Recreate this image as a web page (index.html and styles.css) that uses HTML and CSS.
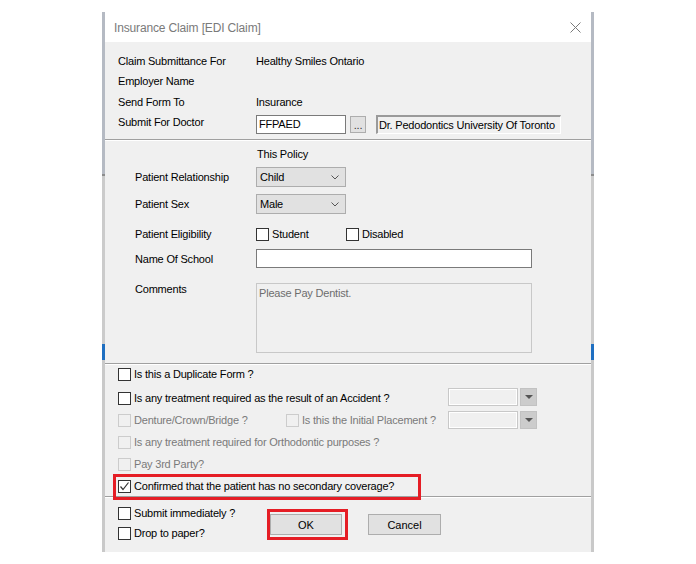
FILE: index.html
```html
<!DOCTYPE html>
<html lang="en">
<head>
    <meta charset="UTF-8">
    <meta name="viewport" content="width=device-width, initial-scale=1.0">
    <title>Insurance Claim [EDI Claim]</title>
    <link rel="stylesheet" href="styles.css">
</head>
<body>

<div class="screen">
    <div class="frame">
        <div class="dialog">

            <!-- Title Bar -->
            <div class="title-bar">
                <span class="title">Insurance Claim [EDI Claim]</span>
                <svg class="close" width="11" height="11" viewBox="0 0 11 11">
                    <path d="M0.5 0.5 L10.5 10.5 M10.5 0.5 L0.5 10.5" stroke="#7a7a7a" stroke-width="1" fill="none"/>
                </svg>
            </div>

            <div class="dialog-body">

                <!-- Claim Info -->
                <div class="claim-info">
                    <div class="info-row"><span class="info-label">Claim Submittance For</span><span>Healthy Smiles Ontario</span></div>
                    <div class="info-row"><span class="info-label">Employer Name</span></div>
                    <div class="info-row send"><span class="info-label">Send Form To</span><span>Insurance</span></div>
                    <div class="info-row doctor">
                        <span class="info-label">Submit For Doctor</span>
                        <div class="text-input doctor-code">FFPAED</div>
                        <div class="browse-btn">...</div>
                        <div class="doctor-name">Dr. Pedodontics University Of Toronto</div>
                    </div>
                </div>

                <div class="separator"></div>

                <!-- Policy -->
                <div class="policy">
                    <div class="policy-title">This Policy</div>

                    <div class="form-row relationship">
                        <span class="form-label">Patient Relationship</span>
                        <div class="select"><span>Child</span>
                            <svg width="8" height="5" viewBox="0 0 8 5"><path d="M0.5 0.5 L4 4 L7.5 0.5" stroke="#555" fill="none"/></svg>
                        </div>
                    </div>

                    <div class="form-row sex">
                        <span class="form-label">Patient Sex</span>
                        <div class="select"><span>Male</span>
                            <svg width="8" height="5" viewBox="0 0 8 5"><path d="M0.5 0.5 L4 4 L7.5 0.5" stroke="#555" fill="none"/></svg>
                        </div>
                    </div>

                    <div class="form-row eligibility">
                        <span class="form-label">Patient Eligibility</span>
                        <label class="check student"><span class="box"></span>Student</label>
                        <label class="check"><span class="box"></span>Disabled</label>
                    </div>

                    <div class="form-row school">
                        <span class="form-label">Name Of School</span>
                        <div class="text-input school-input"></div>
                    </div>

                    <div class="form-row comments">
                        <span class="form-label">Comments</span>
                        <div class="comments-box">Please Pay Dentist.</div>
                    </div>
                </div>

                <div class="separator"></div>

                <!-- Questions -->
                <div class="questions">
                    <div class="q-row">
                        <label class="check"><span class="box"></span>Is this a Duplicate Form ?</label>
                    </div>
                    <div class="q-row accident">
                        <label class="check"><span class="box"></span>Is any treatment required as the result of an Accident ?</label>
                        <div class="combo">
                            <div class="combo-field"></div>
                            <div class="combo-btn"><svg width="8" height="4" viewBox="0 0 8 4"><polygon points="0,0 8,0 4,4" fill="#555"/></svg></div>
                        </div>
                    </div>
                    <div class="q-row">
                        <label class="check disabled denture"><span class="box"></span>Denture/Crown/Bridge ?</label>
                        <label class="check disabled"><span class="box"></span>Is this the Initial Placement ?</label>
                        <div class="combo">
                            <div class="combo-field"></div>
                            <div class="combo-btn"><svg width="8" height="4" viewBox="0 0 8 4"><polygon points="0,0 8,0 4,4" fill="#555"/></svg></div>
                        </div>
                    </div>
                    <div class="q-row">
                        <label class="check disabled"><span class="box"></span>Is any treatment required for Orthodontic purposes ?</label>
                    </div>
                    <div class="q-row">
                        <label class="check disabled"><span class="box"></span>Pay 3rd Party?</label>
                    </div>
                    <div class="q-row highlight">
                        <label class="check"><span class="box">
                            <svg width="11" height="11" viewBox="0 0 11 11"><path d="M1.5 5.5 L4 8.5 L9.5 1.5" stroke="#333" stroke-width="1.2" fill="none"/></svg>
                        </span>Confirmed that the patient has no secondary coverage?</label>
                    </div>
                </div>

                <div class="separator"></div>

                <!-- Footer -->
                <div class="footer">
                    <div class="footer-checks">
                        <div class="q-row"><label class="check"><span class="box"></span>Submit immediately ?</label></div>
                        <div class="q-row"><label class="check"><span class="box"></span>Drop to paper?</label></div>
                    </div>
                    <div class="ok-mark"><button class="btn">OK</button></div>
                    <button class="btn cancel">Cancel</button>
                </div>

            </div>
        </div>
    </div>
</div>

</body>
</html>
```

FILE: styles.css
```css
/* General Styles */
body {
    margin: 0;
    background: #ffffff;
    font-family: "Liberation Sans", Arial, sans-serif;
    font-size: 11px;
    letter-spacing: -0.2px;
    color: #000;
}

/* Window behind the dialog */
.screen {
    padding: 12px 0 0 102px;
}

.frame {
    width: 492px;
    padding: 0 3px;
    box-sizing: border-box;
    background: linear-gradient(to bottom,
        #b5bac3 0, #b5bac3 162px,
        #8d8d8d 162px, #8d8d8d 164px,
        #cbcbcb 164px, #cbcbcb 332px,
        #1f6fc1 332px, #1f6fc1 348px,
        #c9c9c9 348px);
}

.dialog {
    height: 540px;
    display: flex;
    flex-direction: column;
}

/* Title Bar */
.title-bar {
    height: 30px;
    background: #fff;
    display: flex;
    align-items: center;
    justify-content: space-between;
    padding: 0 10px 0 9px;
}

.title {
    font-size: 12px;
    letter-spacing: -0.15px;
    color: #7a7a7a;
    margin-top: 2px;
}

.dialog-body {
    flex: 1;
    background: #f0f0f0;
}

.separator {
    border-top: 1px solid #a0a0a0;
    box-shadow: 0 1px 0 #fff;
}

/* Claim Info */
.claim-info {
    padding: 9px 0 0 13px;
}

.info-row {
    display: flex;
    align-items: center;
    height: 20px;
}

.info-row.send {
    height: 21px;
}

.info-row.doctor {
    height: 27px;
    align-items: flex-start;
    line-height: 20px;
}

.info-label {
    width: 138px;
    flex-shrink: 0;
}

.text-input {
    height: 19px;
    box-sizing: border-box;
    background: #fff;
    border: 1px solid #7a7a7a;
    padding: 0 2px;
    line-height: 17px;
}

.doctor-code {
    width: 90px;
    margin-top: 3px;
}

.browse-btn {
    width: 16px;
    height: 17px;
    box-sizing: border-box;
    margin: 4px 0 0 4px;
    background: #e1e1e1;
    border: 1px solid #adadad;
    line-height: 17px;
    text-align: center;
    color: #333;
}

.doctor-name {
    width: 185px;
    height: 19px;
    box-sizing: border-box;
    margin: 3px 0 0 10px;
    border-top: 2px solid #9a9a9a;
    border-left: 2px solid #9a9a9a;
    border-right: 1px solid #fff;
    border-bottom: 1px solid #fff;
    background: #f0f0f0;
    padding-left: 1px;
    line-height: 16px;
    white-space: nowrap;
    overflow: hidden;
}

/* Policy */
.policy {
    padding: 4px 0 10px 30px;
}

.policy-title {
    margin-left: 122px;
    height: 20px;
    line-height: 20px;
}

.form-row {
    display: flex;
    align-items: center;
    height: 20px;
}

.form-label {
    width: 121px;
    flex-shrink: 0;
}

.relationship { margin-top: 3px; }
.sex { margin-top: 7px; }
.eligibility { margin-top: 10px; }

.school {
    margin-top: 5px;
    height: 19px;
}

.comments {
    margin-top: 15px;
    height: 70px;
    align-items: flex-start;
}

.comments .form-label {
    line-height: 12px;
}

.select {
    width: 90px;
    height: 20px;
    box-sizing: border-box;
    background: #e1e1e1;
    border: 1px solid #adadad;
    display: flex;
    align-items: center;
    justify-content: space-between;
    padding: 0 6px 0 3px;
}

.school-input {
    width: 276px;
}

.comments-box {
    width: 276px;
    height: 70px;
    box-sizing: border-box;
    border: 1px solid #c8c8c8;
    background: #f0f0f0;
    color: #6d6d6d;
    padding: 3px 2px;
}

/* Checkboxes */
.check {
    display: flex;
    align-items: center;
    gap: 3px;
    white-space: nowrap;
}

.box {
    width: 13px;
    height: 13px;
    box-sizing: border-box;
    border: 1px solid #333;
    background: #fff;
    display: flex;
    align-items: center;
    justify-content: center;
}

.check.disabled {
    color: #7a7a7a;
}

.check.disabled .box {
    border-color: #cccccc;
    background: #f0f0f0;
}

.student {
    width: 90px;
}

/* Questions */
.questions {
    padding: 0 54px 0 13px;
}

.q-row {
    display: flex;
    align-items: center;
    height: 20px;
}

.questions .q-row + .q-row {
    margin-top: 2px;
}

.questions .q-row.accident {
    margin-top: 4px;
}

.accident .combo {
    margin-top: -2px;
}

.denture {
    width: 168px;
}

.combo {
    margin-left: auto;
    display: flex;
    gap: 2px;
}

.combo-field {
    width: 70px;
    height: 18px;
    box-sizing: border-box;
    border: 1px solid #c8c8c8;
    box-shadow: inset 0 0 0 1px #fff;
    background: #f0f0f0;
}

.combo-btn {
    width: 17px;
    height: 18px;
    box-sizing: border-box;
    background: #cccccc;
    border: 1px solid #c2c2c2;
    display: flex;
    align-items: center;
    justify-content: center;
}

.highlight {
    position: relative;
}

.highlight::after {
    content: "";
    position: absolute;
    left: -5px;
    top: -2px;
    width: 308px;
    height: 26px;
    box-sizing: border-box;
    border: 3px solid #e51d25;
}

/* Footer */
.footer {
    display: flex;
    align-items: flex-start;
    padding: 6px 0 0 13px;
}

.footer-checks {
    width: 149px;
}

.ok-mark {
    margin-top: 6px;
    padding: 2px 3px 2px 0;
    border: 3px solid #e51d25;
}

.btn {
    display: block;
    width: 73px;
    height: 21px;
    box-sizing: border-box;
    background: #e1e1e1;
    border: 1px solid #adadad;
    font-family: "Liberation Sans", Arial, sans-serif;
    font-size: 11px;
    color: #000;
    padding: 0;
}

.ok-mark .btn {
    width: 72px;
}

.cancel {
    margin: 11px 0 0 20px;
}
```
